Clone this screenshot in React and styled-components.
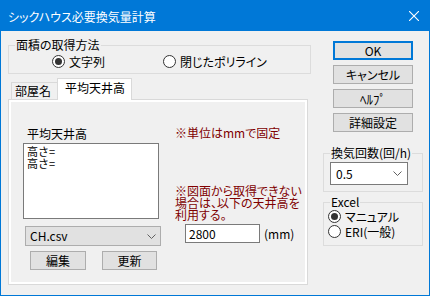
import React from "react";
import styled, { createGlobalStyle } from "styled-components";

const Global = createGlobalStyle`
  html, body { margin: 0; padding: 0; background: #f0f0f0; }
  body {
    font-family: "Noto Sans CJK JP", "Noto Sans", sans-serif;
    font-size: 12px;
    color: #000;
    font-feature-settings: "palt";
  }
  * { box-sizing: border-box; }
`;

const Window = styled.div`
  width: 430px;
  height: 296px;
  border: 1px solid #0078d7;
  display: flex;
  flex-direction: column;
  background: #f0f0f0;
  overflow: hidden;
`;

const TitleBar = styled.div`
  height: 30px;
  background: #0078d7;
  color: #fff;
  display: flex;
  align-items: center;
  justify-content: space-between;
  padding: 0 10px 0 7px;
  font-size: 12px;
`;

const Body = styled.div`
  flex: 1;
  display: flex;
  padding-left: 7px;
`;

const LeftCol = styled.div`
  width: 303px;
  padding-top: 14px;
  display: flex;
  flex-direction: column;
`;

const RightCol = styled.div`
  width: 100px;
  margin-left: 12px;
  padding-top: 10px;
  display: flex;
  flex-direction: column;
`;

const Group = styled.div`
  position: relative;
  border: 1px solid #dcdcdc;
  height: ${(p) => p.$h}px;
  margin-top: ${(p) => p.$mt || 0}px;
  padding: ${(p) => p.$pad || "0"};
`;

const GroupLabel = styled.span`
  position: absolute;
  top: -8px;
  left: 6px;
  padding: 0 1px;
  line-height: 14px;
  background: #f0f0f0;
  white-space: nowrap;
`;

const RadioRow = styled.div`
  display: flex;
  align-items: center;
  padding: ${(p) => p.$pad || "0"};
`;

const RadioItem = styled.label`
  display: flex;
  align-items: center;
  gap: 4px;
  width: ${(p) => (p.$w ? `${p.$w}px` : "auto")};
  height: 15px;
  line-height: 14px;
  white-space: nowrap;
`;

const RadioCircle = styled.span`
  width: 13px;
  height: 13px;
  border-radius: 50%;
  border: 1px solid #333;
  background: #fff;
  display: flex;
  align-items: center;
  justify-content: center;
  flex-shrink: 0;
  &::after {
    content: "";
    width: 7px;
    height: 7px;
    border-radius: 50%;
    background: ${(p) => (p.$on ? "#333" : "transparent")};
  }
`;

const TabStrip = styled.div`
  display: flex;
  align-items: flex-end;
  margin-top: 4px;
  padding-left: 3px;
  height: 22px;
  position: relative;
  z-index: 1;
`;

const Tab = styled.div`
  width: ${(p) => p.$w}px;
  height: ${(p) => (p.$active ? 22 : 18)}px;
  border: 1px solid #d9d9d9;
  border-bottom: ${(p) => (p.$active ? "none" : "1px solid #d9d9d9")};
  background: ${(p) => (p.$active ? "#fff" : "#f0f0f0")};
  ${(p) => (p.$active ? "" : "border-right: none;")}
  display: flex;
  align-items: ${(p) => (p.$active ? "flex-start" : "center")};
  padding-top: ${(p) => (p.$active ? 2 : 0)}px;
  padding-left: ${(p) => (p.$active ? 7 : 3)}px;
  line-height: 14px;
  font-size: 12px;
`;

const Panel = styled.div`
  width: 300px;
  height: 186px;
  margin-top: -1px;
  border: 1px solid #d9d9d9;
  background: #fff;
  padding: 2px;
`;

const PanelInner = styled.div`
  height: 100%;
  background: #f0f0f0;
  display: flex;
`;

const PanelLeft = styled.div`
  width: 152px;
  padding-left: 12px;
  display: flex;
  flex-direction: column;
`;

const PanelRight = styled.div`
  flex: 1;
  padding-left: 12px;
  display: flex;
  flex-direction: column;
`;

const FieldLabel = styled.div`
  margin-top: 25px;
  padding-left: 4px;
  line-height: 13px;
`;

const TextArea = styled.div`
  margin-top: 3px;
  width: 136px;
  height: 76px;
  border: 1px solid #7a7a7a;
  background: #fff;
  padding: 1px 3px;
  line-height: 12px;
  font-size: 11px;
  font-feature-settings: normal;
`;

const Combo = styled.div`
  margin-top: 7px;
  margin-left: 2px;
  width: 136px;
  height: 20px;
  border: 1px solid #adadad;
  background: #e1e1e1;
  display: flex;
  align-items: center;
  justify-content: space-between;
  padding: 0 4px 0 4px;
  line-height: 14px;
  font-size: 12px;
`;

const Select = styled(Combo)`
  margin: 0;
  width: 78px;
  height: 23px;
  background: #fff;
  border-color: #7a7a7a;
  padding: 0 5px 0 5px;
`;

const ButtonRow = styled.div`
  display: flex;
  gap: 16px;
  margin-top: 5px;
  margin-left: 7px;
`;

const Button = styled.div`
  width: ${(p) => p.$w || 80}px;
  height: 19px;
  border: ${(p) => (p.$default ? "2px solid #0078d7" : "1px solid #adadad")};
  background: #e1e1e1;
  display: flex;
  align-items: center;
  justify-content: center;
  line-height: 14px;
  margin-left: ${(p) => p.$ml || 0}px;
  margin-bottom: ${(p) => p.$mb || 0}px;
  font-size: ${(p) => p.$fs || 12}px;
`;

const RedText = styled.div`
  color: #800000;
  line-height: 12px;
  margin-top: ${(p) => p.$mt}px;
  white-space: nowrap;
`;

const InputRow = styled.div`
  display: flex;
  align-items: center;
  margin-top: 3px;
  margin-left: 10px;
  gap: 4px;
`;

const Input = styled.div`
  width: 75px;
  height: 19px;
  border: 1px solid #7a7a7a;
  background: #fff;
  padding-left: 3px;
  display: flex;
  align-items: center;
  line-height: 14px;
`;

const Chevron = () => (
  <svg width="9" height="5" viewBox="0 0 9 5">
    <path d="M0.5 0.5 L4.5 4.5 L8.5 0.5" fill="none" stroke="#606060" strokeWidth="1" />
  </svg>
);

const CloseIcon = () => (
  <svg width="10" height="10" viewBox="0 0 10 10">
    <path d="M0 0 L10 10 M10 0 L0 10" stroke="#fff" strokeWidth="1.1" />
  </svg>
);

export default function App() {
  return (
    <>
      <Global />
      <Window>
        <TitleBar>
          <span>シックハウス必要換気量計算</span>
          <CloseIcon />
        </TitleBar>
        <Body>
          <LeftCol>
            <Group $h={29}>
              <GroupLabel>面積の取得方法</GroupLabel>
              <RadioRow $pad="8px 0 0 43px">
                <RadioItem $w={111}>
                  <RadioCircle $on />
                  文字列
                </RadioItem>
                <RadioItem>
                  <RadioCircle />
                  閉じたポリライン
                </RadioItem>
              </RadioRow>
            </Group>
            <TabStrip>
              <Tab $w={46}>部屋名</Tab>
              <Tab $w={75} $active>
                平均天井高
              </Tab>
            </TabStrip>
            <Panel>
              <PanelInner>
                <PanelLeft>
                  <FieldLabel>平均天井高</FieldLabel>
                  <TextArea>
                    高さ=
                    <br />
                    高さ=
                  </TextArea>
                  <Combo>
                    CH.csv
                    <Chevron />
                  </Combo>
                  <ButtonRow>
                    <Button $w={56}>編集</Button>
                    <Button $w={55}>更新</Button>
                  </ButtonRow>
                </PanelLeft>
                <PanelRight>
                  <RedText $mt={25}>※単位はmmで固定</RedText>
                  <RedText $mt={46}>
                    ※図面から取得できない
                    <br />
                    場合は、以下の天井高を
                    <br />
                    利用する。
                  </RedText>
                  <InputRow>
                    <Input>2800</Input>
                    <span>(mm)</span>
                  </InputRow>
                </PanelRight>
              </PanelInner>
            </Panel>
          </LeftCol>
          <RightCol>
            <Button $default $ml={10} $mb={5}>OK</Button>
            <Button $ml={10} $mb={5}>キャンセル</Button>
            <Button $ml={10} $mb={5} $fs={13}>ﾍﾙﾌﾟ</Button>
            <Button $ml={10}>詳細設定</Button>
            <Group $h={39} $mt={21} $pad="8px 0 0 6px">
              <GroupLabel>換気回数(回/h)</GroupLabel>
              <Select>
                0.5
                <Chevron />
              </Select>
            </Group>
            <Group $h={44} $mt={10} $pad="6px 0 0 4px">
              <GroupLabel>Excel</GroupLabel>
              <RadioItem>
                <RadioCircle $on />
                マニュアル
              </RadioItem>
              <RadioItem>
                <RadioCircle />
                ERI(一般)
              </RadioItem>
            </Group>
          </RightCol>
        </Body>
      </Window>
    </>
  );
}
